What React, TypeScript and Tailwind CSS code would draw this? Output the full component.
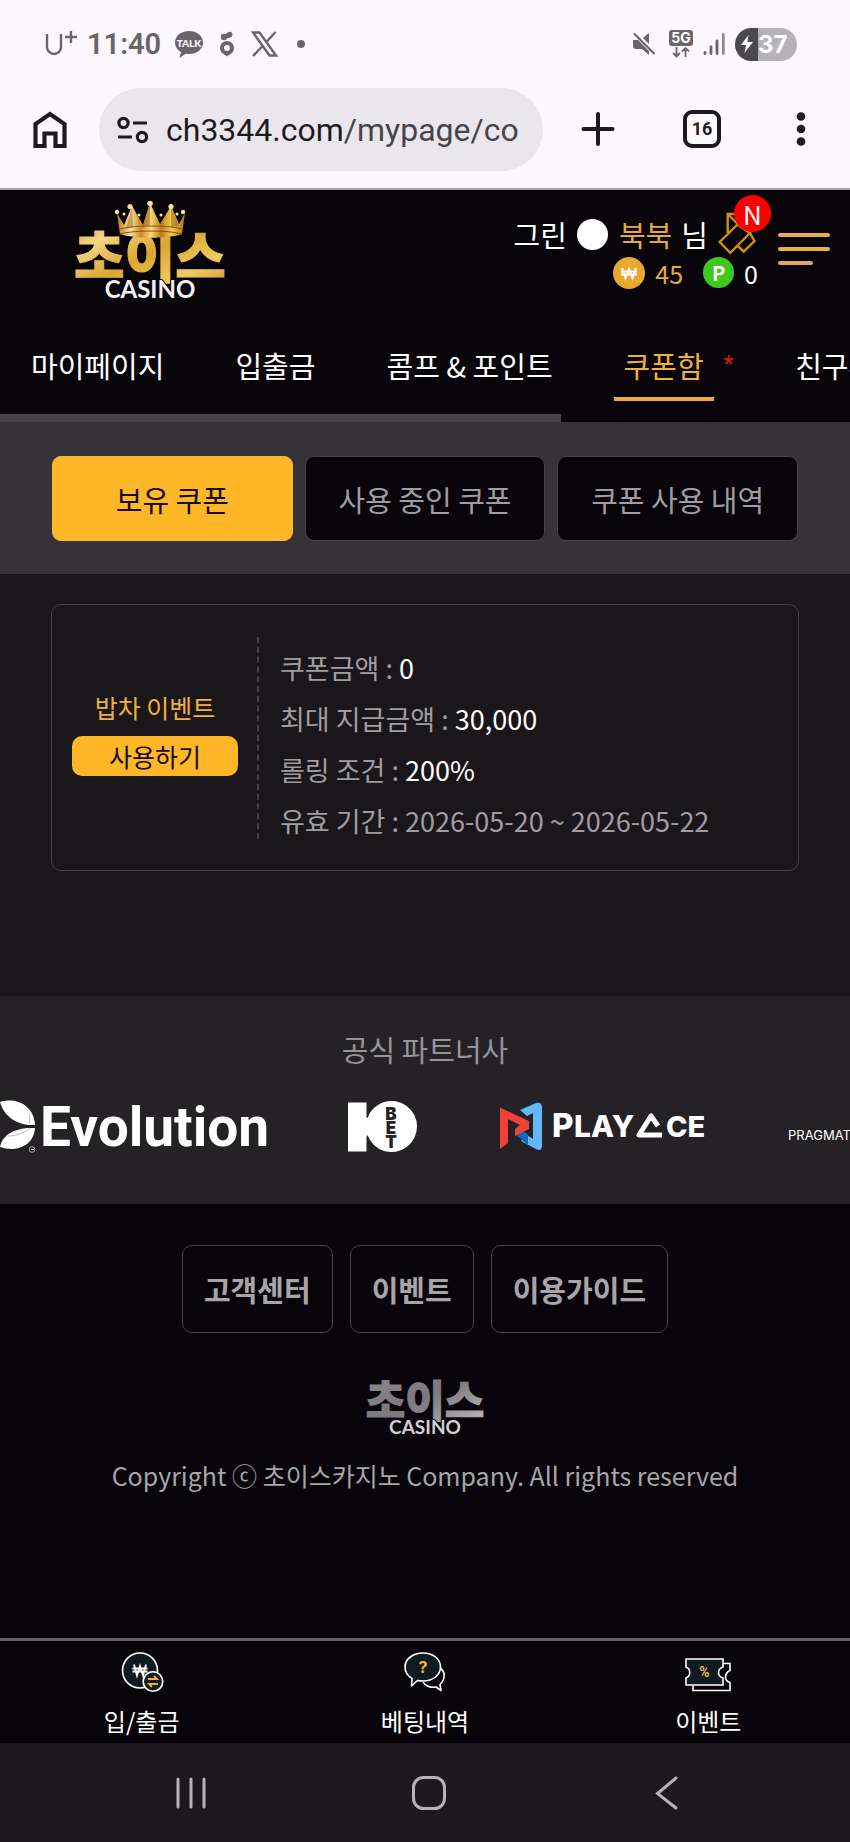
import React, { useState } from 'react';

const menus = ['마이페이지', '입출금', '콤프 & 포인트', '쿠폰함', '친구추천'];
const couponTabs = ['보유 쿠폰', '사용 중인 쿠폰', '쿠폰 사용 내역'];
const footerLinks = ['고객센터', '이벤트', '이용가이드'];

const couponRows = [
  { label: '쿠폰금액', value: '0', strong: true },
  { label: '최대 지급금액', value: '30,000', strong: true },
  { label: '롤링 조건', value: '200%', strong: true },
  { label: '유효 기간', value: '2026-05-20 ~ 2026-05-22', strong: false },
];

// 상태 표시줄
function StatusBar() {
  return (
    <div className="flex h-[88px] items-center justify-between pl-[44px] pr-[53px] text-[#69666b]">
      <div className="flex items-center">
        <svg width="34" height="28" viewBox="0 0 34 28" fill="none" stroke="currentColor" strokeWidth="2.4">
          <path d="M3 4v13a7 7 0 0 0 14 0V4" />
          <path d="M27 1v12M21 7h12" />
        </svg>
        <span className="ml-[9px] text-[29px] leading-8 font-semibold">11:40</span>
        <svg className="ml-[13px]" width="30" height="28" viewBox="0 0 30 28">
          <path d="M15 1C7 1 1 6 1 12.500c0 4 2.400 7.500 6 9.500l-1.500 6 6-4.200c1.100.2 2.300.3 3.500.3 8 0 14-5 14-11.600S23 1 15 1z" fill="currentColor" />
          <text x="15" y="16.500" textAnchor="middle" fontSize="10" fontWeight="900" fill="#fbf9fd" fontFamily="Lato, sans-serif">TALK</text>
        </svg>
        <svg className="ml-[15px]" width="16" height="26" viewBox="0 0 16 26">
          <circle cx="8" cy="17" r="5" fill="none" stroke="currentColor" strokeWidth="4" />
          <path d="M4 22l4 3.500 4-3.500z" fill="currentColor" />
          <circle cx="5" cy="6" r="3.200" fill="currentColor" />
          <ellipse cx="10" cy="4" rx="3.600" ry="2.800" transform="rotate(-30 10 4)" fill="currentColor" />
        </svg>
        <svg className="ml-[16px]" width="27" height="26" viewBox="0 0 27 26" fill="none" stroke="currentColor" strokeWidth="2.400">
          <path d="M2 1.500h6.500L25 24.500h-6.500zM24.500 1L15 11.500M12 14.500L2 25" />
        </svg>
        <span className="ml-[19px] size-2 rounded-full bg-current" />
      </div>
      <div className="flex items-center">
        <svg width="24" height="24" viewBox="0 0 24 24">
          <path d="M1 8h5l11 11v4l-7-6H4a3 3 0 0 1-3-3z" fill="currentColor" />
          <path d="M17 1v11l-6-6z" fill="currentColor" />
          <path d="M2 1.500l20.500 20.500" stroke="currentColor" strokeWidth="2.200" />
        </svg>
        <svg className="ml-[12px]" width="26" height="30" viewBox="0 0 26 30">
          <rect x="1" y="1" width="24" height="16" rx="3" fill="currentColor" />
          <text x="13" y="14" textAnchor="middle" fontSize="14" fontWeight="700" fill="#fff" fontFamily="Inter, sans-serif">5G</text>
          <path d="M8.500 18v9M5 24l3.500 3.500L12 24M17.500 28v-9M14 22.500l3.500-3.500 3.500 3.500" fill="none" stroke="currentColor" strokeWidth="1.800" />
        </svg>
        <svg className="ml-[9px]" width="22" height="24" viewBox="0 0 22 24" stroke="currentColor" strokeWidth="2.800" strokeLinecap="round">
          <path d="M2 20.500v1M8 15v6.500M14 9v12.500" />
          <path d="M20.300 2.500v19" strokeOpacity=".75" />
        </svg>
        <div className="ml-[10px] flex h-[33px] w-[62px] overflow-hidden rounded-full bg-[#b5b3b8]">
          <div className="flex w-[23px] items-center justify-center bg-[#4c494e]">
            <svg width="14" height="18" viewBox="0 0 14 18" fill="#fff">
              <path d="M8.500 0L1 10h5l-1.500 8L13 7H7.500z" />
            </svg>
          </div>
          <span className="font-['Inter'] text-[24px] leading-[33px] font-bold text-white">37</span>
        </div>
      </div>
    </div>
  );
}

// 브라우저 주소창
function BrowserBar() {
  return (
    <div className="flex h-[100px] items-start text-[#1d1b20]">
      <button aria-label="홈" className="ml-[32px] mt-[22px]">
        <svg width="36" height="39" viewBox="0 0 36 39" fill="none" stroke="currentColor" strokeWidth="4.200">
          <path d="M3.500 36V14L18 4l14.500 10v22h-9V23.500h-11V36z" />
        </svg>
      </button>
      <button className="ml-[31px] flex h-[83px] w-[444px] items-center rounded-full bg-[#e9e7ec] pl-[17px]">
        <svg width="32" height="28" viewBox="0 0 32 28" fill="none" stroke="currentColor" strokeWidth="3.200">
          <circle cx="7.500" cy="7" r="4.600" />
          <circle cx="26" cy="21" r="4.600" />
          <path d="M17 7h14M2 21h14" />
        </svg>
        <span className="ml-[18px] text-[32px] leading-10 whitespace-nowrap">
          ch3344.com<span className="text-[#47454b]">/mypage/co</span>
        </span>
      </button>
      <div className="flex items-center pl-[38px] pt-[22px]">
        <button aria-label="새 탭">
          <svg width="34" height="38" viewBox="0 0 34 38" stroke="currentColor" strokeWidth="4" strokeLinecap="round">
            <path d="M17 4v30M2.500 19h29" />
          </svg>
        </button>
        <button className="ml-[68px] flex h-[38px] w-[38px] items-center justify-center rounded-[9px] border-4 border-[#1d1b20] text-lg leading-5 font-bold">
          16
        </button>
        <button aria-label="메뉴" className="ml-[75px]">
          <svg width="10" height="38" viewBox="0 0 10 38" fill="currentColor">
            <circle cx="5" cy="6.500" r="4.300" />
            <circle cx="5" cy="19" r="4.300" />
            <circle cx="5" cy="31.500" r="4.300" />
          </svg>
        </button>
      </div>
    </div>
  );
}

function Logo() {
  return (
    <svg width="156" height="104" viewBox="0 0 156 104" role="img" aria-label="초이스 CASINO">
      <defs>
        <linearGradient id="gold" x1="0" y1="0" x2="1" y2="1">
          <stop offset="0" stopColor="#c8922c" />
          <stop offset=".25" stopColor="#f3d685" />
          <stop offset=".5" stopColor="#dba52f" />
          <stop offset=".75" stopColor="#f0cb62" />
          <stop offset="1" stopColor="#c98f2a" />
        </linearGradient>
        <linearGradient id="crown" x1="0" y1="0" x2="1" y2="0">
          <stop offset="0" stopColor="#b5761f" />
          <stop offset=".2" stopColor="#fbe3a0" />
          <stop offset=".35" stopColor="#c98a22" />
          <stop offset=".5" stopColor="#f8d877" />
          <stop offset=".65" stopColor="#bb7a1b" />
          <stop offset=".8" stopColor="#f3cc4f" />
          <stop offset="1" stopColor="#a86c1b" />
        </linearGradient>
      </defs>
      <text x="78" y="78" textAnchor="middle" fontSize="55" fontWeight="900" fill="url(#gold)" stroke="url(#gold)" strokeWidth="1" fontFamily="'Noto Sans CJK KR', sans-serif">초이스</text>
      <path d="M48 35L45 14l7 12 8-19 11 19L78 4l10 21 11-18 8 18 6-11-3 21c-14 5-48 5-62 0z" fill="url(#crown)" />
      <path d="M78 5v21l-8 3zM60 8l1 20-7 2zM99 8v21l8-2z" fill="#8f5a12" opacity=".45" />
      <path d="M48 30c14-4 48-4 62 0M48 35c14-4 48-4 62 0" fill="none" stroke="#8b5510" strokeWidth="1.200" />
      <g fill="#f6e0a8">
        <circle cx="45" cy="13" r="2.200" />
        <circle cx="58" cy="7.500" r="2.600" />
        <circle cx="78" cy="4.500" r="2.800" />
        <circle cx="99" cy="7.500" r="2.600" />
        <circle cx="111" cy="13" r="2.200" />
        <circle cx="52" cy="15" r="1.500" />
        <circle cx="67" cy="16" r="1.500" />
        <circle cx="89" cy="16" r="1.500" />
        <circle cx="105" cy="15" r="1.500" />
      </g>
      <text x="78" y="99" textAnchor="middle" fontSize="24" fontWeight="700" fill="#f4f2f5" stroke="#08050a" strokeWidth="2" paintOrder="stroke" fontFamily="Lato, sans-serif">CASINO</text>
    </svg>
  );
}

function Header() {
  return (
    <header className="bg-[#08050a] text-white">
      <div className="flex h-[130px] items-start justify-between pl-[72px] pr-[20px]">
        <a href="#" className="mt-[9px]">
          <Logo />
        </a>
        <div className="flex items-start">
          <div className="flex flex-col items-end pt-[24px]">
            <div className="flex h-10 items-center text-[29px] leading-10">
              <span>그린</span>
              <span className="ml-[10px] size-[31px] rounded-full bg-white" />
              <span className="ml-[11px] text-[#e9a83f]">북북</span>
              <span className="ml-[9px]">님</span>
              <a href="#" aria-label="쿠폰 알림" className="relative ml-[8px]">
                <svg width="42" height="44" viewBox="0 0 42 44" fill="none" stroke="#cf9012" strokeWidth="2.400">
                  <path d="M11.700 21V2h11M11.700 2l10.500 10.500M21.500 12.500L3.700 30l10.600 10.800L34 21zM34 21l4.500 8-10.800 10.500-6.500-6" />
                </svg>
                <span className="absolute -top-[17px] left-[18px] flex size-[37px] items-center justify-center rounded-full bg-[#fe0000] text-[26px] leading-8">
                  N
                </span>
              </a>
            </div>
            <div className="flex h-[37px] items-center text-[25px] leading-9">
              <svg width="32" height="32" viewBox="0 0 32 32">
                <circle cx="16" cy="16" r="16" fill="#e9a92e" />
                <path d="M9 11l3.500 10L16 12l3.500 9L23 11M8 14.500h16M8 17.500h16" fill="none" stroke="#fff" strokeWidth="2" />
              </svg>
              <span className="ml-[10px] text-[#e9a83f]">45</span>
              <span className="ml-5 flex size-[31px] items-center justify-center rounded-full bg-[#3fc91e] text-xl font-bold">P</span>
              <span className="ml-[10px]">0</span>
            </div>
          </div>
          <button aria-label="전체 메뉴" className="ml-[20px] mt-[43px] flex flex-col gap-[10px]">
            <span className="h-[4px] w-[52px] rounded-full bg-[#e9ae4a]" />
            <span className="h-[4px] w-[52px] rounded-full bg-[#e9ae4a]" />
            <span className="h-[4px] w-[35px] rounded-full bg-[#e6a560]" />
          </button>
        </div>
      </div>
      <nav className="flex h-[94px] items-center gap-[71px] overflow-hidden pb-1 pl-[31px] text-[29px] leading-10 whitespace-nowrap">
        {menus.map((menu) =>
          menu === '쿠폰함' ? (
            <a key={menu} href="#" className="-mr-[11px] flex text-[#f0b13c]">
              <span className="relative">
                {menu}
                <span className="absolute -inset-x-[10px] -bottom-[16px] h-[4px] bg-[#e9ae3c]" />
              </span>
              <span className="ml-[18px] text-[#d5121b]">*</span>
            </a>
          ) : (
            <a key={menu} href="#">{menu}</a>
          )
        )}
      </nav>
      <div className="h-2">
        <div className="h-full w-[66%] bg-[#48454a]" />
      </div>
    </header>
  );
}

function CouponCard() {
  return (
    <section className="mx-[51px] mt-[30px] flex rounded-[10px] border border-[#454347] pt-8 pb-6 pl-5">
      <div className="flex h-[202px] w-[187px] flex-col items-start justify-center gap-[10px] border-r-2 border-dashed border-[#454347] pb-3 text-[25px] leading-[38px]">
        <div className="w-[166px] text-center text-[#f0b13c]">밥차 이벤트</div>
        <button className="h-10 w-[166px] rounded-[10px] bg-[#ffb727] text-[#150d05]">사용하기</button>
      </div>
      <ul className="pt-[5px] pl-[21px] text-[27px] leading-[51px] text-[#a09da1]">
        {couponRows.map((row) => (
          <li key={row.label}>
            {row.label} : {row.strong ? <span className="text-white">{row.value}</span> : row.value}
          </li>
        ))}
      </ul>
    </section>
  );
}

function Partners() {
  return (
    <section className="h-[208px] overflow-hidden bg-[#242225] pt-[33px]">
      <h2 className="text-center text-[29px] leading-10 text-[#979498]">공식 파트너사</h2>
      <div className="mt-[30px] flex">
        <svg className="shrink-0" width="272" height="56" viewBox="0 0 272 56" role="img" aria-label="Evolution">
          <path d="M0 3C14-2 34 5 35 26 18 27 4 18 0 3z" fill="#fff" />
          <path d="M0 48C2 36 15 28 35 29 34 46 17 54 0 48z" fill="#fff" />
          <path d="M8 37c8 0 16-3 22-8M29 25c1-4 1-7 0-10" fill="none" stroke="#aaa8ad" strokeWidth=".8" />
          <circle cx="32" cy="50.500" r="2.800" fill="none" stroke="#aaa8ad" />
          <path d="M31 50.500h3" stroke="#aaa8ad" />
          <text x="40" y="47" fontSize="55" fontWeight="700" fill="#fff" fontFamily="Roboto, sans-serif">Evolution</text>
        </svg>
        <svg className="ml-[76px] shrink-0" width="70" height="56" viewBox="0 0 70 56" role="img" aria-label="10BET">
          <path d="M0 3.500h18.500v15l1 .500A25.500 25.500 0 1 1 19.500 36l-1 2v14.500H0z" fill="#fff" />
          <g fill="#242225" fontSize="17" fontWeight="900" fontFamily="Inter, sans-serif" textAnchor="middle">
            <text x="43" y="21">B</text>
            <text x="43" y="35">E</text>
            <text x="43" y="49">T</text>
          </g>
        </svg>
        <svg className="ml-[82px] shrink-0" width="210" height="56" viewBox="0 0 210 56" role="img" aria-label="PLAYACE">
          <path d="M20 11L36 4c4-1 6 1 6 4v39c0 4-3 5-6 3L21 42l6-6 6 4V14l-6 3z" fill="#62b8fa" />
          <path d="M15 35l7-5 6 6v10z" fill="#0f68c0" />
          <path d="M0 8.500L29 22v8L15 37V30l5-4L8 20v24l-8 6z" fill="#f0403a" />
          <g fill="#fff" fontWeight="800" fontFamily="Inter, sans-serif">
            <text x="52" y="38" fontSize="33">P</text>
            <text x="74" y="38" fontSize="30">LAY</text>
            <text x="166" y="38" fontSize="29">CE</text>
          </g>
          <path d="M158 27l-7-10-12 19h23" fill="none" stroke="#fff" strokeWidth="5" strokeLinejoin="round" />
        </svg>
        <span className="ml-[78px] pt-6 font-['Inter'] text-[13px] leading-6 whitespace-nowrap text-white">PRAGMATIC PLAY</span>
      </div>
    </section>
  );
}

function FooterLogo() {
  return (
    <svg width="120" height="62" viewBox="0 0 120 62" role="img" aria-label="초이스 CASINO">
      <defs>
        <linearGradient id="silver" x1="0" y1="0" x2="1" y2="1">
          <stop offset="0" stopColor="#8c8a8e" />
          <stop offset=".5" stopColor="#7b797d" />
          <stop offset="1" stopColor="#c2c0c4" />
        </linearGradient>
      </defs>
      <text x="60" y="41" textAnchor="middle" fontSize="43" fontWeight="900" fill="url(#silver)" stroke="url(#silver)" strokeWidth="1" fontFamily="'Noto Sans CJK KR', sans-serif">초이스</text>
      <text x="60" y="58" textAnchor="middle" fontSize="19" fontWeight="700" fill="#d2d0d4" stroke="#08050a" strokeWidth="2" paintOrder="stroke" fontFamily="Lato, sans-serif">CASINO</text>
    </svg>
  );
}

function BottomNav() {
  return (
    <nav className="grid h-[105px] grid-cols-3 border-t-[3px] border-[#636164] bg-[#08050a] pt-[10px] text-[24px] leading-9 text-white">
      <a href="#" className="flex flex-col items-center gap-[10px]">
        <svg width="44" height="42" viewBox="0 0 44 42" fill="none" stroke="#fff" strokeWidth="1.600">
          <circle cx="20" cy="19.500" r="17.500" fill="#101a20" />
          <path d="M14 13.500l3 11 3-9.500 3 9.500 3-11M12.500 17.500h15M12.500 20.500h15" strokeWidth="1.800" />
          <circle cx="33" cy="30.500" r="9.800" fill="#101a20" />
          <path d="M28 28h9l-3-3M38 33h-9l3 3" stroke="#f0b13c" strokeWidth="1.800" />
        </svg>
        입/출금
      </a>
      <a href="#" className="flex flex-col items-center gap-[10px]">
        <svg width="44" height="42" viewBox="0 0 44 42" fill="none" stroke="#fff" strokeWidth="1.600" strokeLinejoin="round">
          <path d="M20 31c2 4 8 6 13 5l5 3.500-1-6c6-6 5-13 .5-16" />
          <path d="M20 2C10 2 2 8 2 16c0 5 3 9 7 11.500L8.500 35l6-5.500c2 .4 3.500.5 5.500.5 10 0 17.500-6 17.500-14S30 2 20 2z" fill="#101a20" />
          <text x="20" y="22" textAnchor="middle" fontSize="16" fontWeight="700" stroke="none" fill="#f0b13c" fontFamily="Inter, sans-serif">?</text>
        </svg>
        베팅내역
      </a>
      <a href="#" className="flex flex-col items-center gap-[10px]">
        <svg width="48" height="42" viewBox="0 0 48 42" fill="none" stroke="#fff" strokeWidth="1.600">
          <path d="M9 34.500v5h37v-8c-6-2-6-9 0-12v-7h-7" />
          <path d="M2 8h37v8c-6 2-6 9 0 11v7H2v-7c5-2 5-9 0-11z" fill="#101a20" />
          <text x="20.500" y="26" textAnchor="middle" fontSize="14" fontWeight="700" stroke="none" fill="#f0b13c" fontFamily="Roboto, sans-serif">%</text>
        </svg>
        이벤트
      </a>
    </nav>
  );
}

function SystemNav() {
  return (
    <div className="grid h-[99px] grid-cols-3 place-items-center bg-[#1b191d] pl-[72px] pr-[64px]">
      <button aria-label="최근 앱">
        <svg width="34" height="36" viewBox="0 0 34 36" stroke="#b6b3b8" strokeWidth="3" strokeLinecap="round">
          <path d="M4 4v28M17 4v28M30 4v28" />
        </svg>
      </button>
      <button aria-label="홈 화면">
        <svg width="36" height="36" viewBox="0 0 36 36" fill="none" stroke="#b6b3b8" strokeWidth="3">
          <rect x="2.500" y="2.500" width="31" height="31" rx="10" />
        </svg>
      </button>
      <button aria-label="뒤로">
        <svg width="24" height="36" viewBox="0 0 24 36" fill="none" stroke="#b6b3b8" strokeWidth="3" strokeLinecap="round">
          <path d="M21 3L2.500 18.500 21 33" />
        </svg>
      </button>
    </div>
  );
}

function App() {
  const [activeTab, setActiveTab] = useState<string>(couponTabs[0]);

  return (
    <div className="flex min-h-screen flex-col overflow-x-hidden bg-[#1a171b] font-['Noto_Sans_CJK_KR',sans-serif]">
      <div className="border-b-2 border-[#a5a1a8] bg-[#fbf9fd] font-['Roboto',sans-serif]">
        <StatusBar />
        <BrowserBar />
      </div>

      <Header />

      {/* 쿠폰 탭 */}
      <div className="grid grid-cols-3 gap-3 bg-[#363338] px-[52px] pt-[34px] pb-[33px]">
        {couponTabs.map((tab) => (
          <button
            key={tab}
            className={`h-[85px] rounded-[9px] border text-[29px] leading-10 whitespace-nowrap ${
              activeTab === tab
                ? 'border-[#ffb727] bg-[#ffb727] text-[#150d05]'
                : 'border-[#454347] bg-[#08050a] text-[#a09da1]'
            }`}
            onClick={() => setActiveTab(tab)}
          >
            {tab}
          </button>
        ))}
      </div>

      <main className="pb-[125px]">
        <CouponCard />
      </main>

      <Partners />

      {/* 푸터 */}
      <footer className="flex flex-1 flex-col items-center bg-[#08050a] pt-[41px] text-[#a8a5a9]">
        <div className="flex gap-[17px] text-[29px] leading-10 font-bold">
          {footerLinks.map((link) => (
            <a key={link} href="#" className="rounded-[10px] border border-[#454347] px-[21px] py-[23px]">
              {link}
            </a>
          ))}
        </div>
        <div className="mt-[43px]">
          <FooterLogo />
        </div>
        <p className="mt-[17px] text-[25px] leading-10">Copyright ⓒ 초이스카지노 Company. All rights reserved</p>
      </footer>

      <BottomNav />
      <SystemNav />
    </div>
  );
}

export default App;
